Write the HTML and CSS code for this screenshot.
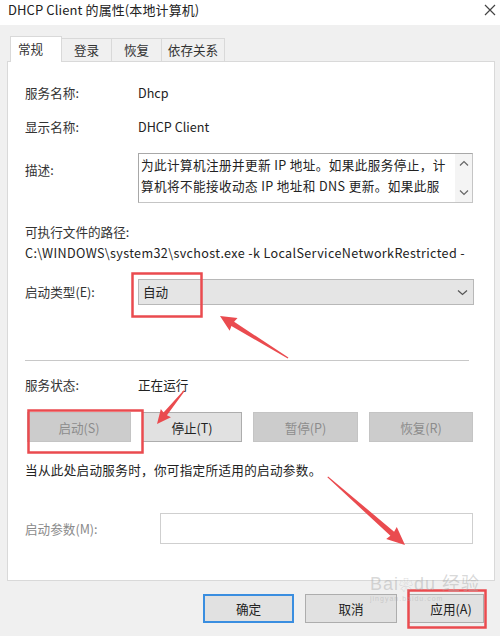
FILE: index.html
```html
<!DOCTYPE html>
<html lang="zh-CN">
<head>
<meta charset="utf-8">
<title>DHCP Client 的属性(本地计算机)</title>
<link rel="stylesheet" href="styles.css">
</head>
<body>
<div class="window">
  <div class="titlebar">
    <span class="title">DHCP Client 的属性(本地计算机)</span>
    <svg class="close" width="12" height="12" viewBox="0 0 12 12"><path d="M1 1 L11 11 M11 1 L1 11" stroke="#444" stroke-width="1.2" fill="none"/></svg>
  </div>
  <div class="client">
    <div class="tabs">
      <div class="tab active">常规</div>
      <div class="tab">登录</div>
      <div class="tab">恢复</div>
      <div class="tab">依存关系</div>
    </div>
    <div class="panel">
      <div class="row r-name"><span class="label">服务名称:</span><span class="value">Dhcp</span></div>
      <div class="row r-display"><span class="label">显示名称:</span><span class="value">DHCP Client</span></div>
      <div class="row r-desc">
        <span class="label desc-label">描述:</span>
        <div class="textarea">
          <div class="ta-text">为此计算机注册并更新 IP 地址。如果此服务停止，计<br>算机将不能接收动态 IP 地址和 DNS 更新。如果此服</div>
          <div class="scrollbar">
            <svg width="10" height="7" viewBox="0 0 10 7"><path d="M1 5.5 L5 1.5 L9 5.5" stroke="#666" stroke-width="1.2" fill="none"/></svg>
            <svg width="10" height="7" viewBox="0 0 10 7"><path d="M1 1.5 L5 5.5 L9 1.5" stroke="#666" stroke-width="1.2" fill="none"/></svg>
          </div>
        </div>
      </div>
      <div class="row r-pathlabel"><span class="label">可执行文件的路径:</span></div>
      <div class="row r-path"><span class="path">C:\WINDOWS\system32\svchost.exe -k LocalServiceNetworkRestricted -</span></div>
      <div class="row r-type">
        <span class="label">启动类型(E):</span>
        <div class="select">
          <span>自动</span>
          <svg width="11" height="7" viewBox="0 0 11 7"><path d="M1 1.5 L5.5 5.5 L10 1.5" stroke="#555" stroke-width="1.2" fill="none"/></svg>
        </div>
      </div>
      <div class="divider"></div>
      <div class="row r-status"><span class="label">服务状态:</span><span class="value">正在运行</span></div>
      <div class="btnrow">
        <div class="btn disabled w1">启动(S)</div>
        <div class="btn w2">停止(T)</div>
        <div class="btn disabled w3">暂停(P)</div>
        <div class="btn disabled w4">恢复(R)</div>
      </div>
      <div class="row r-hint"><span class="hint">当从此处启动服务时，你可指定所适用的启动参数。</span></div>
      <div class="row r-params">
        <span class="label plabel">启动参数(M):</span>
        <div class="input"></div>
      </div>
    </div>
    <div class="footer">
      <div class="btn fbtn ok">确定</div>
      <div class="btn fbtn cancel">取消</div>
      <div class="btn fbtn apply">应用(A)</div>
    </div>
  </div>

  <svg class="annot" width="500" height="636" viewBox="0 0 500 636">
    <g fill="none" stroke="#ea4b4f" stroke-width="2.5">
      <rect x="132.5" y="273.5" width="69" height="43"/>
      <rect x="28.5" y="410.5" width="114" height="42"/>
      <rect x="408.5" y="590.5" width="77" height="37"/>
    </g>
    <g fill="#ea4b4f">
      <g transform="translate(220,316) rotate(211.7)">
        <polygon points="-80,-0.6 -15,-2.6 -16,-7.5 0,0 -16,7.5 -15,2.6 -80,0.6"/>
      </g>
      <g transform="translate(157,424) rotate(129.3)">
        <polygon points="-43,-0.6 -13,-2.2 -14,-6.5 0,0 -14,6.5 -13,2.2 -43,0.6"/>
      </g>
      <g transform="translate(405,545) rotate(41.4)">
        <polygon points="-103,-0.6 -17,-2.8 -18,-8 0,0 -18,8 -17,2.8 -103,0.6"/>
      </g>
    </g>
  </svg>
  <div class="watermark">
    <span class="wm-big">Bai<span class="paw">❀</span>du 经验</span>
    <span class="wm-small">jingyan.baidu.com</span>
  </div>
</div>
</body>
</html>
```

FILE: styles.css
```css
html, body {
  margin: 0;
  padding: 0;
}
body {
  width: 500px;
  height: 636px;
  overflow: hidden;
  background: #f0f0f0;
  font-family: "Noto Sans CJK SC", "Noto Sans", sans-serif;
  font-size: 12.6px;
  color: #1e1e1e;
}
.window {
  position: relative;
  width: 500px;
  height: 636px;
  background: #f0f0f0;
}
.titlebar {
  height: 25px;
  background: #ffffff;
  display: flex;
  align-items: center;
  justify-content: space-between;
  padding: 0 4px 6px 8px;
  box-sizing: border-box;
}
.title {
  font-size: 13px;
  color: #222;
  line-height: 18px;
  letter-spacing: 0.1px;
}
.close {
  margin-top: 1px;
}
.client {
  padding: 11px 5px 0 7px;
}
.tabs {
  display: flex;
  padding-left: 3px;
  height: 25px;
  align-items: flex-end;
}
.tab {
  height: 23px;
  line-height: 22px;
  box-sizing: border-box;
  border: 1px solid #d9d9d9;
  border-bottom: none;
  margin-left: -1px;
  background: #f0f0f0;
  text-align: center;
  color: #333;
}
.tab:nth-child(1) { width: 52px; }
.tab:nth-child(2) { width: 51px; }
.tab:nth-child(3) { width: 51px; }
.tab:nth-child(4) { width: 64px; }
.tab.active {
  height: 26px;
  line-height: 24px;
  margin-left: 0;
  margin-bottom: -1px;
  background: #ffffff;
  position: relative;
  z-index: 1;
  text-align: left;
  padding-left: 7px;
}
.panel {
  height: 520px;
  box-sizing: border-box;
  background: #ffffff;
  border: 1px solid #d9d9d9;
  padding: 0 0 0 17px;
  display: flex;
  flex-direction: column;
}
.row {
  display: flex;
  align-items: center;
  line-height: 20px;
  min-height: 20px;
}
.label {
  width: 113px;
  flex: none;
  color: #333;
}
.value {
  color: #222;
}
.r-name { margin-top: 21px; }
.r-display { margin-top: 14px; }
.r-desc { margin-top: 16px; align-items: flex-start; }
.desc-label { padding-top: 7px; }
.textarea {
  width: 335px;
  height: 50px;
  box-sizing: border-box;
  border: 1px solid #c5c5c5;
  border-top-color: #a8a8a8;
  border-left-color: #a8a8a8;
  display: flex;
}
.ta-text {
  flex: 1;
  padding-left: 2px;
  line-height: 21px;
  color: #222;
  white-space: nowrap;
  overflow: hidden;
  letter-spacing: 0.4px;
}
.scrollbar {
  width: 17px;
  flex: none;
  background: #f4f4f4;
  display: flex;
  flex-direction: column;
  align-items: center;
  justify-content: space-between;
  padding: 6px 0 6px;
  box-sizing: border-box;
}
.r-pathlabel { margin-top: 19px; }
.r-path { margin-top: 1px; }
.path {
  white-space: nowrap;
  color: #222;
  letter-spacing: 0.35px;
}
.r-type { margin-top: 16px; }
.select {
  width: 336px;
  height: 26px;
  box-sizing: border-box;
  background: #e5e5e5;
  border: 1px solid #b8b8b8;
  display: flex;
  align-items: center;
  justify-content: space-between;
  padding: 0 5px 0 4px;
  color: #222;
}
.divider {
  margin-top: 55px;
  width: 444px;
  height: 1px;
  background: #c8c8c8;
}
.r-status { margin-top: 14px; }
.btnrow {
  margin-top: 17px;
  display: flex;
  gap: 11px;
  margin-left: 2px;
}
.btn {
  height: 30px;
  box-sizing: border-box;
  border: 1px solid #adadad;
  background: #e1e1e1;
  display: flex;
  align-items: center;
  justify-content: center;
  color: #222;
}
.btn.disabled {
  background: #cccccc;
  border-color: #c4c4c4;
  color: #8c8c8c;
}
.w1 { width: 104px; }
.w2 { width: 100px; }
.w3 { width: 105px; }
.w4 { width: 104px; }
.r-hint { margin-top: 18px; }
.hint {
  color: #222;
  letter-spacing: 0.3px;
}
.r-params { margin-top: 33px; }
.plabel {
  width: 135px;
  color: #8a8a8a;
}
.input {
  width: 313px;
  height: 31px;
  box-sizing: border-box;
  border: 1px solid #cfcfcf;
  background: #ffffff;
}
.footer {
  margin-top: 13px;
  display: flex;
  padding-left: 196px;
  gap: 11px;
}
.fbtn {
  height: 29px;
}
.ok {
  width: 91px;
  border: 2px solid #3a8ee0;
}
.cancel { width: 92px; }
.apply {
  width: 76px;
  padding-left: 10px;
}
.annot {
  position: absolute;
  left: 0;
  top: 0;
  pointer-events: none;
}
.watermark {
  position: absolute;
  left: 370px;
  top: 575px;
  display: flex;
  flex-direction: column;
  color: rgba(170, 170, 170, 0.45);
  pointer-events: none;
  line-height: 1;
}
.wm-big {
  font-family: "Liberation Sans", sans-serif;
  font-size: 18px;
  letter-spacing: 1px;
}
.paw {
  font-size: 14px;
}
.wm-small {
  font-family: "Liberation Sans", sans-serif;
  font-size: 7px;
  margin-top: 2px;
  letter-spacing: 1px;
}
```
